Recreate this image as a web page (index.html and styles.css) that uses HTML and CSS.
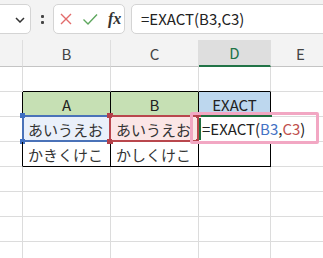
FILE: index.html
```html
<!DOCTYPE html>
<html lang="ja">
<head>
<meta charset="utf-8">
<link rel="stylesheet" href="styles.css">
</head>
<body>
<div class="app">
  <div class="toolbar">
    <div class="namebox">
      <svg class="chev" width="10" height="6" viewBox="0 0 10 6"><path d="M1 1 L5 5 L9 1" fill="none" stroke="#333" stroke-width="1.5"/></svg>
    </div>
    <div class="dots"><span></span><span></span></div>
    <div class="fxbox">
      <svg class="ico" width="14" height="14" viewBox="0 0 14 14"><path d="M2 2 L12 12 M12 2 L2 12" stroke="#e26b6b" stroke-width="1.4" fill="none"/></svg>
      <svg class="ico" width="16" height="14" viewBox="0 0 16 14"><path d="M1.5 7.5 L6 12 L15 2.5" stroke="#5ea75e" stroke-width="1.4" fill="none"/></svg>
      <span class="fx">fx</span>
    </div>
    <div class="fbar">=EXACT(B3,C3)</div>
  </div>
  <div class="sheet">
    <div class="c h rh"></div>
    <div class="c h">B</div>
    <div class="c h">C</div>
    <div class="c h sel">D</div>
    <div class="c h">E</div>

    <div class="c rh"></div>
    <div class="c tb"></div>
    <div class="c tb"></div>
    <div class="c tb"></div>
    <div class="c"></div>

    <div class="c rh tl"></div>
    <div class="c t g">A</div>
    <div class="c t g">B</div>
    <div class="c t bl">EXACT</div>
    <div class="c"></div>

    <div class="c rh tl"></div>
    <div class="c t l refb">あいうえお<i class="box bbox"><b class="k kb tlc"></b><b class="k kb blc"></b><b class="k kr trc"></b><b class="k kr brc"></b></i></div>
    <div class="c t l refc">あいうえお<i class="box rbox"><b class="k kr tlc"></b><b class="k kr blc"></b><b class="k kr trc"></b><b class="k kr brc"></b></i></div>
    <div class="c t act"><span class="edit">=EXACT(<span class="fb">B3</span>,<span class="fc">C3</span>)</span><i class="caret"></i><i class="pink"></i></div>
    <div class="c"></div>

    <div class="c rh tl"></div>
    <div class="c t l">かきくけこ</div>
    <div class="c t l">かしくけこ</div>
    <div class="c t"></div>
    <div class="c"></div>

    <div class="c rh"></div><div class="c"></div><div class="c"></div><div class="c"></div><div class="c"></div>
    <div class="c rh"></div><div class="c"></div><div class="c"></div><div class="c"></div><div class="c"></div>
    <div class="c rh"></div><div class="c"></div><div class="c"></div><div class="c"></div><div class="c"></div>
    <div class="c rh"></div><div class="c"></div><div class="c"></div><div class="c"></div><div class="c"></div>
  </div>
</div>
</body>
</html>
```
FILE: styles.css
```css
* { box-sizing: border-box; }
html, body { margin: 0; padding: 0; }
body {
  width: 323px;
  height: 258px;
  overflow: hidden;
  background: #fff;
  font-family: "Noto Sans CJK JP", "Noto Sans", sans-serif;
  color: #222;
}
.app { width: 323px; height: 258px; overflow: hidden; }
.toolbar {
  height: 40px;
  background: #f3f3f3;
  display: flex;
  align-items: flex-start;
  padding-top: 4px;
}
.toolbar > * { flex-shrink: 0; }
.namebox {
  margin-left: -10px;
  width: 41px;
  height: 30px;
  background: #fff;
  border: 1px solid #d4d4d4;
  border-radius: 5px;
  display: flex;
  align-items: center;
  justify-content: flex-end;
  padding-right: 5px;
}
.chev { display: block; margin-top: 2px; }
.dots {
  width: 22px;
  height: 30px;
  display: flex;
  flex-direction: column;
  align-items: center;
  justify-content: center;
  gap: 3px;
}
.dots span { width: 3px; height: 3px; background: #444; border-radius: 1px; }
.fxbox {
  width: 72px;
  height: 30px;
  background: #fff;
  border: 1px solid #d4d4d4;
  border-radius: 5px;
  display: flex;
  align-items: center;
  padding-left: 5px;
  gap: 9px;
}
.ico { display: block; }
.fx {
  font-family: "Liberation Serif", serif;
  font-style: italic;
  font-weight: bold;
  font-size: 16px;
  color: #333;
  margin-left: 1px;
}
.fbar {
  margin-left: 6px;
  width: 210px;
  height: 30px;
  background: #fff;
  border: 1px solid #d4d4d4;
  border-radius: 5px;
  padding-left: 9px;
  font-size: 15px;
  line-height: 28px;
  color: #222;
}
.sheet {
  display: grid;
  grid-template-columns: 23px 88px 88px 72px 60px;
  grid-template-rows: 27px repeat(8, 25px);
}
.c {
  border-right: 1px solid #dcdcdc;
  border-bottom: 1px solid #dcdcdc;
  font-size: 15px;
  display: flex;
  align-items: center;
  justify-content: center;
  position: relative;
  white-space: nowrap;
}
.h {
  background: #f3f3f3;
  border-bottom-color: #c4c4c4;
  color: #444;
  font-size: 15px;
  border-right-color: #dedede;
}
.h.sel {
  background: #dedede;
  color: #217346;
  border-bottom: 2px solid #217346;
}
.tb { border-bottom-color: #000; }
.tl { border-right-color: #000; }
.t { border-right-color: #000; border-bottom-color: #000; }
.g { background: #c6e0b4; }
.bl { background: #bdd7ee; }
.l { justify-content: flex-start; padding-left: 5px; color: #333; }
.refb { background: #eaf0fa; }
.refc { background: #fbe6e6; }
.box {
  position: absolute;
  left: -2px; top: -2px; right: -1px; bottom: -1px;
  border: 2px solid;
  pointer-events: none;
}
.bbox { border-color: #4a72b8; }
.rbox { border-color: #b9474d; z-index: 1; }
.refb .box { left: -1px; }
.k { position: absolute; width: 5px; height: 5px; }
.kb { background: #3f6fc2; }
.kr { background: #b3404a; }
.tlc { left: -4px; top: -4px; }
.blc { left: -4px; bottom: -4px; }
.trc { right: -4px; top: -4px; }
.brc { right: -4px; bottom: -4px; }
.act { justify-content: flex-start; }
.act::before {
  content: "";
  position: absolute;
  left: 0; right: -2px; top: -2px;
  height: 2px;
  background: #1e6e3e;
}
.edit {
  position: absolute;
  left: 0; top: 0;
  width: 116px;
  height: 24px;
  background: #fff;
  padding-left: 3px;
  line-height: 24px;
  color: #222;
  z-index: 2;
}
.fb { color: #4472c4; }
.fc { color: #c0504d; }
.caret {
  position: absolute;
  left: 0; top: 1px;
  width: 2px; height: 22px;
  background: #1e6e3e;
  z-index: 3;
}
.pink {
  position: absolute;
  left: -9px; top: -5px;
  width: 129px; height: 32px;
  border: 3px solid #f2a7c3;
  border-radius: 2px;
  z-index: 4;
}
```
